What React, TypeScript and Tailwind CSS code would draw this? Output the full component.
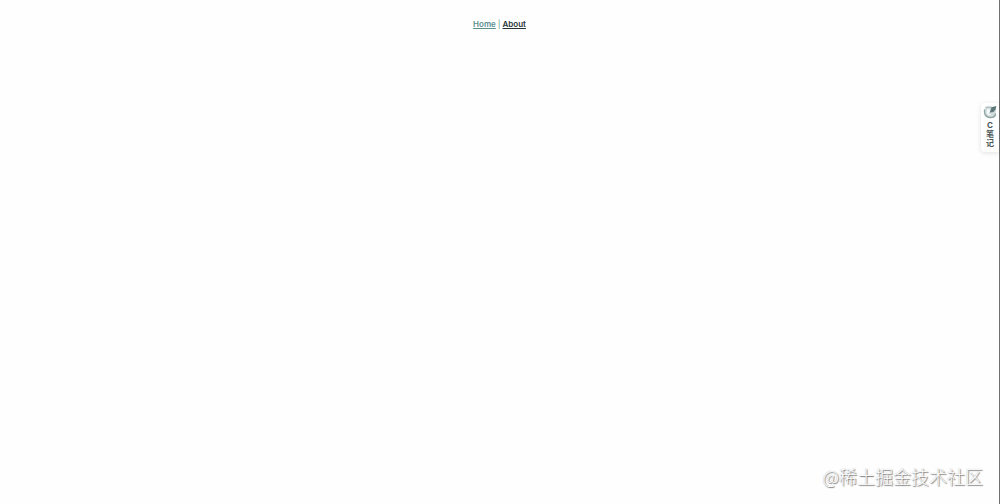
import React from "react";

function NoteIcon() {
  return (
    <svg viewBox="0 0 14 14" className="h-3.5 w-3.5" aria-hidden="true">
      <path d="M4 1.6h4.6L7 7l3-.2 2.8-3v4.6c0 2.6-2.2 4.4-5.4 4.4C3.4 12.8 1 10.6 1 7.2 1 4 2 1.8 4 1.6z" fill="#d0dbdb" />
      <path d="M1.6 4.6C.6 8 2.4 12.6 7.4 12.6c3 0 5-1.8 5.2-4" fill="none" stroke="#8fa3a3" strokeWidth="1.3" />
      <path d="M2.6 2.2h6" stroke="#9eb0b0" strokeWidth="0.9" />
      <path d="M4 4.2h3.8L5.6 8.4l3.2 1.4-3.4.4L3.6 8z" fill="#f7fafa" />
      <path d="M13.4 1 8.4 2.2 6.8 7.4l3.6-.4 2.2-2.6z" fill="#5f7778" />
    </svg>
  );
}

export default function App() {
  return (
    <div className="relative flex min-h-screen flex-col border-r border-[#707070] bg-[#fefefe] font-['Inter','Noto_Sans_CJK_SC',sans-serif] text-[#2c3e50]">
      <nav className="flex justify-center gap-[2px] pt-[18px] text-[8px] leading-3 font-semibold">
        <a href="#home" className="text-[#5b8f90] underline">
          Home
        </a>
        <span className="font-normal text-[#5b8f90]">|</span>
        <a href="#about" className="text-[#26323a] underline">
          About
        </a>
      </nav>

      <button
        type="button"
        className="absolute top-[103px] right-0 flex w-[18px] flex-col items-center rounded-l-sm bg-white pt-0.5 pb-1 text-[8px] leading-[9px] font-bold text-[#4a5555] shadow-[0_1px_5px_rgba(0,0,0,0.12)]"
      >
        <NoteIcon />
        <span className="mt-0.5">C</span>
        <span>笔</span>
        <span>记</span>
      </button>

      <footer className="mt-auto flex justify-end pr-4 pb-[15px] font-['Noto_Sans_CJK_SC',sans-serif] text-[18px] leading-[26px] font-light text-white [text-shadow:1px_1px_1px_#777,0_0_1px_#aaa]">
        @稀土掘金技术社区
      </footer>
    </div>
  );
}
